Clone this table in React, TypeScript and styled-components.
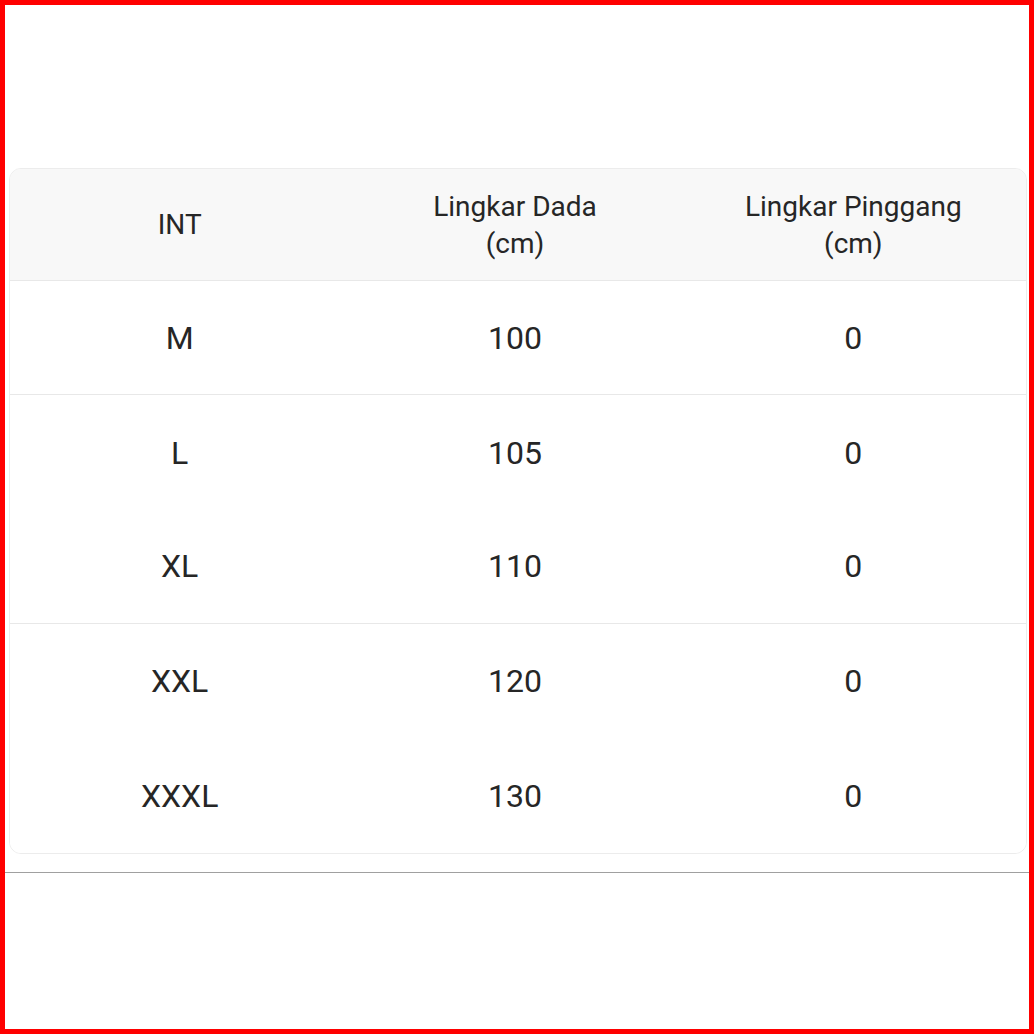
import React from "react";
import styled, { createGlobalStyle } from "styled-components";

const Global = createGlobalStyle`
  html, body { margin: 0; padding: 0; background: #ffffff; }
  * { box-sizing: border-box; }
`;

const Frame = styled.div`
  width: 1034px;
  height: 1034px;
  border: 5px solid #ff0000;
  background: #ffffff;
  padding: 163px 2px 0 4px;
  font-family: Roboto, "Noto Sans", sans-serif;
  color: #262626;
`;

const Card = styled.div`
  border: 1px solid #ececec;
  border-radius: 12px;
  overflow: hidden;
  background: #ffffff;
`;

const Row = styled.div<{ $head?: boolean; $divider?: boolean }>`
  display: grid;
  grid-template-columns: 340fr 332fr 346fr;
  height: ${(p) => (p.$head ? "112px" : "114.4px")};
  background: ${(p) => (p.$head ? "#f8f8f8" : "#ffffff")};
  border-bottom: ${(p) => (p.$divider ? "1px solid #e8e8e8" : "none")};
`;

const Cell = styled.div<{ $head?: boolean }>`
  display: flex;
  align-items: center;
  justify-content: center;
  text-align: center;
  font-size: ${(p) => (p.$head ? "28px" : "32px")};
  line-height: ${(p) => (p.$head ? "37px" : "38px")};
  font-weight: 400;
`;

const Rule = styled.hr`
  margin: 18px -2px 0 -4px;
  border: none;
  border-top: 1px solid #a0a0a0;
  height: 0;
`;

const rows = [
  { int: "M", dada: "100", pinggang: "0", divider: true },
  { int: "L", dada: "105", pinggang: "0", divider: false },
  { int: "XL", dada: "110", pinggang: "0", divider: true },
  { int: "XXL", dada: "120", pinggang: "0", divider: false },
  { int: "XXXL", dada: "130", pinggang: "0", divider: false },
];

export default function App() {
  return (
    <>
      <Global />
      <Frame>
        <Card>
          <Row $head $divider>
            <Cell $head>INT</Cell>
            <Cell $head>
              Lingkar Dada
              <br />
              (cm)
            </Cell>
            <Cell $head>
              Lingkar Pinggang
              <br />
              (cm)
            </Cell>
          </Row>
          {rows.map((r) => (
            <Row key={r.int} $divider={r.divider}>
              <Cell>{r.int}</Cell>
              <Cell>{r.dada}</Cell>
              <Cell>{r.pinggang}</Cell>
            </Row>
          ))}
        </Card>
        <Rule />
      </Frame>
    </>
  );
}
